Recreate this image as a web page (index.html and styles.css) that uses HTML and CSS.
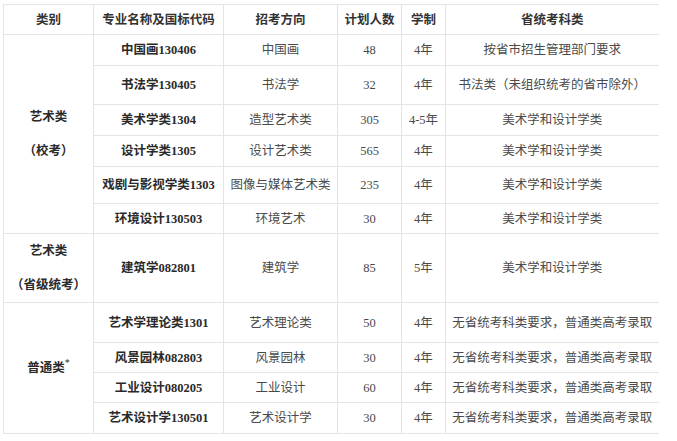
FILE: index.html
```html
<!DOCTYPE html>
<html lang="zh-CN">
<head>
<meta charset="utf-8">
<title>招生专业表</title>
<link rel="stylesheet" href="styles.css">
</head>
<body>
<table class="plan">
  <colgroup>
    <col class="c-cat"><col class="c-major"><col class="c-dir"><col class="c-num"><col class="c-year"><col class="c-exam">
  </colgroup>
  <thead>
    <tr class="h30">
      <th>类别</th><th>专业名称及国标代码</th><th>招考方向</th><th>计划人数</th><th>学制</th><th>省统考科类</th>
    </tr>
  </thead>
  <tbody>
    <tr class="h31">
      <td class="cat" rowspan="6">艺术类<br><span class="halt">（校考）</span></td>
      <td class="major">中国画130406</td><td>中国画</td><td>48</td><td>4年</td><td>按省市招生管理部门要求</td>
    </tr>
    <tr class="h39">
      <td class="major">书法学130405</td><td>书法学</td><td>32</td><td>4年</td><td>书法类（未组织统考的省市除外）</td>
    </tr>
    <tr class="h31">
      <td class="major">美术学类1304</td><td>造型艺术类</td><td>305</td><td>4-5年</td><td>美术学和设计学类</td>
    </tr>
    <tr class="h31">
      <td class="major">设计学类1305</td><td>设计艺术类</td><td>565</td><td>4年</td><td>美术学和设计学类</td>
    </tr>
    <tr class="h37">
      <td class="major">戏剧与影视学类1303</td><td>图像与媒体艺术类</td><td>235</td><td>4年</td><td>美术学和设计学类</td>
    </tr>
    <tr class="h30">
      <td class="major">环境设计130503</td><td>环境艺术</td><td>30</td><td>4年</td><td>美术学和设计学类</td>
    </tr>
    <tr class="h65">
      <td class="cat">艺术类<br><span class="halt">（省级统考）</span></td>
      <td class="major">建筑学082801</td><td>建筑学</td><td>85</td><td>5年</td><td>美术学和设计学类</td>
    </tr>
    <tr class="h40">
      <td class="cat" rowspan="4">普通类<sup>*</sup></td>
      <td class="major">艺术学理论类1301</td><td>艺术理论类</td><td>50</td><td>4年</td><td>无省统考科类要求，普通类高考录取</td>
    </tr>
    <tr class="h30">
      <td class="major">风景园林082803</td><td>风景园林</td><td>30</td><td>4年</td><td>无省统考科类要求，普通类高考录取</td>
    </tr>
    <tr class="h30">
      <td class="major">工业设计080205</td><td>工业设计</td><td>60</td><td>4年</td><td>无省统考科类要求，普通类高考录取</td>
    </tr>
    <tr class="h31">
      <td class="major">艺术设计学130501</td><td>艺术设计学</td><td>30</td><td>4年</td><td>无省统考科类要求，普通类高考录取</td>
    </tr>
  </tbody>
</table>
</body>
</html>
```

FILE: styles.css
```css
html, body {
  margin: 0;
  padding: 0;
  background: #ffffff;
}

body {
  font-family: "Liberation Serif", "Noto Sans CJK SC", serif;
  color: #4a4a4a;
}

.plan {
  border-collapse: collapse;
  table-layout: fixed;
  width: 655px;
  margin: 4px 0 0 3px;
  font-size: 12.5px;
}

.c-cat { width: 90px; }
.c-major { width: 130px; }
.c-dir { width: 114px; }
.c-num { width: 64px; }
.c-year { width: 44px; }
.c-exam { width: 213px; }

.plan th,
.plan td {
  border: 1px solid #e4e4e4;
  text-align: center;
  vertical-align: middle;
  padding: 0 2px;
  white-space: nowrap;
  line-height: 16px;
}

.plan th:last-child,
.plan td:last-child {
  border-right: none;
}

.plan th {
  font-weight: 700;
  color: #333333;
}

.plan td.major {
  font-weight: 700;
  color: #2a2a2a;
}

.plan td.cat {
  font-weight: 700;
  color: #2a2a2a;
  line-height: 34px;
}

.halt {
  font-feature-settings: "halt" 1;
}

.plan sup {
  font-size: 10px;
  line-height: 0;
  vertical-align: 6px;
  font-weight: 400;
}

.h30 { height: 30px; }
.h31 { height: 31px; }
.h37 { height: 37px; }
.h39 { height: 39px; }
.h40 { height: 40px; }
.h65 { height: 65px; }
```
